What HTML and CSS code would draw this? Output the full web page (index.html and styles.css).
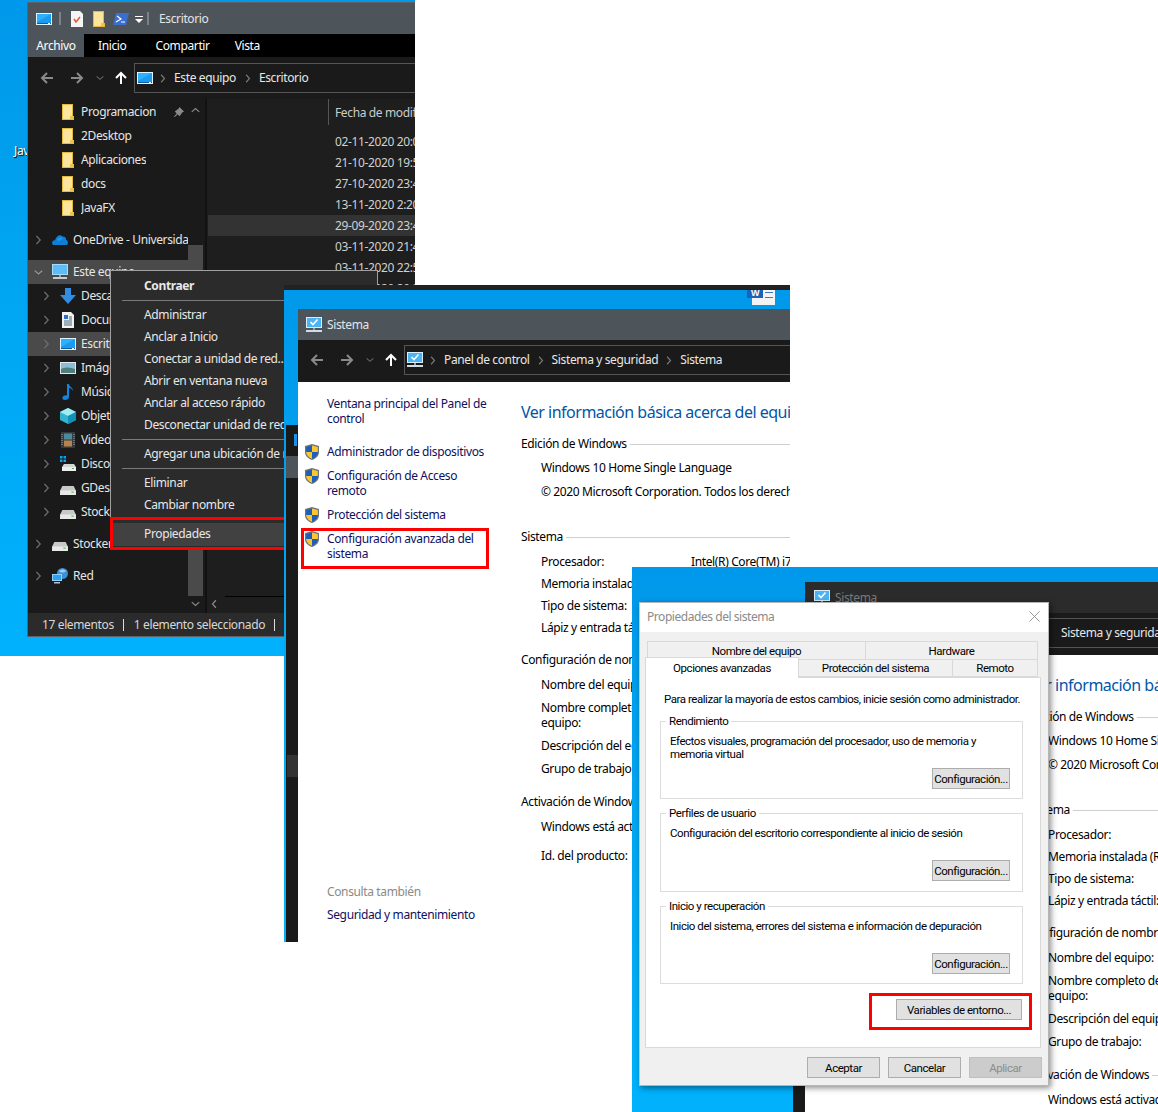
FILE: index.html
```html
<!DOCTYPE html>
<html lang="es">
<head>
	<meta charset="UTF-8">
	<title>Variables de entorno</title>
	<link rel="stylesheet" href="styles.css">
</head>
<body>
	<svg class="sprite" width="0" height="0">
		<symbol id="pc" viewBox="0 0 16 12"><rect width="16" height="12" fill="#dff2ff"/><rect x="1" y="1" width="14" height="9" fill="#1a9bf2"/><path d="M1 1h14L1 9z" fill="#2fb0fa"/><rect x="1" y="10" width="14" height="1" fill="#0a5fa8"/><rect x="12" y="10" width="2" height="1" fill="#fff"/></symbol>
		<symbol id="cp" viewBox="0 0 16 16"><rect width="16" height="11" fill="#d7eefc"/><rect x="1" y="1" width="14" height="9" fill="#4cb4f4"/><path d="M4.500 5l2.500 2.500 4.500-5" fill="none" stroke="#fff" stroke-width="1.600"/><rect x="7" y="11" width="2" height="2" fill="#8fa0ac"/><rect y="13" width="16" height="2" fill="#d3dce2"/></symbol>
		<symbol id="monitor" viewBox="0 0 16 16"><rect width="16" height="11" fill="#a6dcfc"/><rect x="1" y="1" width="14" height="9" fill="#5cbdf7"/><rect x="7" y="11" width="2" height="2" fill="#8fa0ac"/><rect x="1" y="13" width="14" height="2" fill="#c3ced6"/></symbol>
		<symbol id="folder" viewBox="0 0 12 16"><path d="M0 0h11v12h1v4H0z" fill="#e5b93f"/><path d="M1 1h9v11h1v3H1z" fill="#fde59c"/><path d="M8 12h3v3H8z" fill="#f0c350"/></symbol>
		<symbol id="clip" viewBox="0 0 12 16"><path d="M0 0h9l3 3v13H0z" fill="#f5f5f5"/><path d="M3 8l2 3 4-5" fill="none" stroke="#e0542b" stroke-width="1.400"/></symbol>
		<symbol id="ps" viewBox="0 0 16 12"><path d="M3 0h13l-3 12H0z" fill="#3a6fd0"/><path d="M4 3l4 3-5 3" fill="none" stroke="#fff" stroke-width="1.200"/><path d="M8 9h4" stroke="#fff"/></symbol>
		<symbol id="qat" viewBox="0 0 8 8"><path d="M0 0h8v1H0zM0 3h8L4 7z" fill="#fff"/></symbol>
		<symbol id="shield" viewBox="0 0 16 16"><path d="M8 0l7 2v6c0 4-3 6.500-7 8-4-1.500-7-4-7-8V2z" fill="#6b7480"/><path d="M8 1.500L2.200 3v5H8z" fill="#1d5fb5"/><path d="M8 1.500L13.800 3v5H8z" fill="#fcc72e"/><path d="M2.200 8H8v6.800C5 13.500 2.400 11.500 2.200 8z" fill="#fcc72e"/><path d="M13.800 8H8v6.800c3-1.300 5.600-3.300 5.800-6.800z" fill="#1d5fb5"/></symbol>
		<symbol id="back" viewBox="0 0 14 14"><path d="M13 7H2M7 2L2 7l5 5" fill="none" stroke="currentColor" stroke-width="2"/></symbol>
		<symbol id="fwd" viewBox="0 0 14 14"><path d="M1 7h11M7 2l5 5-5 5" fill="none" stroke="currentColor" stroke-width="2"/></symbol>
		<symbol id="up" viewBox="0 0 14 14"><path d="M7 13V2M2 7l5-5 5 5" fill="none" stroke="currentColor" stroke-width="2"/></symbol>
		<symbol id="chev-r" viewBox="0 0 8 12"><path d="M1.500 1l4.500 5-4.500 5" fill="none" stroke="currentColor" stroke-width="1.600"/></symbol>
		<symbol id="chev-d" viewBox="0 0 12 8"><path d="M1 1.500l5 4.500 5-4.500" fill="none" stroke="currentColor" stroke-width="1.600"/></symbol>
		<symbol id="chev-u" viewBox="0 0 12 8"><path d="M1 6.500L6 2l5 4.500" fill="none" stroke="currentColor" stroke-width="1.600"/></symbol>
		<symbol id="chev-l" viewBox="0 0 8 12"><path d="M6.500 1L2 6l4.500 5" fill="none" stroke="currentColor" stroke-width="1.600"/></symbol>
		<symbol id="pin" viewBox="0 0 12 12"><path d="M7 0l5 5-2 1-2 3-1 1-2-2-3 3-1-.5L4 7 2 5l1-1 3-2z" fill="#8a8a8a"/></symbol>
		<symbol id="cloud" viewBox="0 0 16 12"><path d="M1 11c-2-2-.500-5 2-4.800C4 2 8-.5 10.500 2.500c3-.5 4 2 3.500 3.500 2 0 2.500 3.500 1 5z" fill="#0d7fd8"/><path d="M5 6c1.500-3 5-3 6-1-2 0-3 1-3 2z" fill="#1a9bee"/></symbol>
		<symbol id="down" viewBox="0 0 16 16"><path d="M5 0h6v7h5l-8 9-8-9h5z" fill="#2f8de4"/></symbol>
		<symbol id="doc" viewBox="0 0 12 16"><path d="M0 0h9l3 3v13H0z" fill="#f2f2f2"/><path d="M2 3h4v4H2z" fill="#2f6fd0"/><path d="M7 5h3M7 7h3M2 9h8M2 11h8M2 13h8" stroke="#4a6a80"/></symbol>
		<symbol id="pic" viewBox="0 0 16 12"><rect width="16" height="12" fill="#e4e8ea"/><rect x="1" y="1" width="14" height="10" fill="#8cbcd6"/><path d="M1 7c4-2 9-2 14 0v4H1z" fill="#4f7f7a"/></symbol>
		<symbol id="note" viewBox="0 0 12 16"><path d="M5 0h2c0 3 4 3 4 7-1-2-2-3-4-3v9c0 2-2 3-4 3s-3-1-2.500-2.500S3 11 5 11.500z" fill="#1384e0"/></symbol>
		<symbol id="cube" viewBox="0 0 16 16"><path d="M8 0l8 4v8l-8 4-8-4V4z" fill="#33b4cf"/><path d="M8 0l8 4-8 4-8-4z" fill="#9fecf2"/><path d="M8 8v8l8-4V4z" fill="#1490b8"/></symbol>
		<symbol id="film" viewBox="0 0 14 16"><rect width="14" height="16" fill="#333b40"/><rect x="3" y="1.500" width="8" height="6" fill="#4c8a9a"/><rect x="3" y="8.500" width="8" height="6" fill="#b9824a"/><path d="M1 2v12M13 2v12" stroke="#aaa" stroke-dasharray="1 1"/></symbol>
		<symbol id="drive" viewBox="0 0 14 8"><path d="M2 0h10l2 4v4H0V4z" fill="#c8c8c8"/><path d="M0 4h14v4H0z" fill="#e8e8e8"/><rect x="10" y="5" width="2" height="1" fill="#3fc24a"/></symbol>
		<symbol id="win-drive" viewBox="0 0 16 16"><path d="M0 0h2.500v2.500H0zM3.500 0H6v2.500H3.500zM0 3.500h2.500V6H0zM3.500 3.500H6V6H3.500z" fill="#0fa0ee"/><path d="M4 8h10l2 3v4H2v-4z" fill="#d5d5d5"/><path d="M2 11h14v4H2z" fill="#eee"/><rect x="12" y="12" width="2" height="1" fill="#3fc24a"/></symbol>
		<symbol id="net" viewBox="0 0 16 16"><circle cx="10.500" cy="5.500" r="5.500" fill="#3e8fd6"/><path d="M7 3c2-2 5-2 7 0-2 2-5 2-7 0z" fill="#9ccdf0"/><rect y="6" width="10" height="7" fill="#8fd3fb"/><rect x="1" y="7" width="8" height="5" fill="#2fa0ee"/><rect x="2" y="14" width="6" height="1.500" fill="#b6c3cc"/></symbol>
	</svg>

	<!-- primera captura: explorador -->
	<section class="shot shot-a">
		<span class="desk-label">Jav</span>
		<div class="win">
			<div class="title-bar">
				<svg class="ico pc-ico"><use href="#pc"/></svg>
				<i class="title-sep"></i>
				<svg class="ico tall-ico clip-ico"><use href="#clip"/></svg>
				<svg class="ico tall-ico"><use href="#folder"/></svg>
				<svg class="ico pc-ico"><use href="#ps"/></svg>
				<svg class="qat-drop"><use href="#qat"/></svg>
				<i class="title-sep"></i>
				<span class="title-text">Escritorio</span>
			</div>
			<div class="ribbon">
				<span class="rib-tab rib-file">Archivo</span>
				<span class="rib-tab rib-inicio">Inicio</span>
				<span class="rib-tab rib-share">Compartir</span>
				<span class="rib-tab rib-view">Vista</span>
			</div>
			<div class="nav-bar">
				<div class="nav-btns">
					<svg class="nav-ico"><use href="#back"/></svg>
					<svg class="nav-ico"><use href="#fwd"/></svg>
					<svg class="nav-drop"><use href="#chev-d"/></svg>
					<svg class="nav-ico nav-up"><use href="#up"/></svg>
				</div>
				<div class="crumbs">
					<svg class="ico pc-ico"><use href="#pc"/></svg>
					<svg class="crumb-sep"><use href="#chev-r"/></svg>
					<span>Este equipo</span>
					<svg class="crumb-sep"><use href="#chev-r"/></svg>
					<span>Escritorio</span>
				</div>
			</div>
			<div class="explorer">
				<div class="tree">
					<div class="tree-row sub-folder"><svg class="ico tall-ico"><use href="#folder"/></svg><span>Programacion</span></div>
					<div class="tree-row sub-folder"><svg class="ico tall-ico"><use href="#folder"/></svg><span>2Desktop</span></div>
					<div class="tree-row sub-folder"><svg class="ico tall-ico"><use href="#folder"/></svg><span>Aplicaciones</span></div>
					<div class="tree-row sub-folder"><svg class="ico tall-ico"><use href="#folder"/></svg><span>docs</span></div>
					<div class="tree-row sub-folder"><svg class="ico tall-ico"><use href="#folder"/></svg><span>JavaFX</span></div>
					<div class="tree-row root spaced"><svg class="chev"><use href="#chev-r"/></svg><svg class="ico pc-ico"><use href="#cloud"/></svg><span>OneDrive - Universida</span></div>
					<div class="tree-row root spaced hot"><svg class="chev-open"><use href="#chev-d"/></svg><svg class="ico box-ico"><use href="#monitor"/></svg><span>Este equipo</span></div>
					<div class="tree-row child"><svg class="chev"><use href="#chev-r"/></svg><svg class="ico box-ico"><use href="#down"/></svg><span>Descargas</span></div>
					<div class="tree-row child"><svg class="chev"><use href="#chev-r"/></svg><svg class="ico box-ico"><use href="#doc"/></svg><span>Documentos</span></div>
					<div class="tree-row child hot"><svg class="chev"><use href="#chev-r"/></svg><svg class="ico box-ico"><use href="#pc"/></svg><span>Escritorio</span></div>
					<div class="tree-row child"><svg class="chev"><use href="#chev-r"/></svg><svg class="ico box-ico"><use href="#pic"/></svg><span>Imágenes</span></div>
					<div class="tree-row child"><svg class="chev"><use href="#chev-r"/></svg><svg class="ico box-ico"><use href="#note"/></svg><span>Música</span></div>
					<div class="tree-row child"><svg class="chev"><use href="#chev-r"/></svg><svg class="ico box-ico"><use href="#cube"/></svg><span>Objetos 3D</span></div>
					<div class="tree-row child"><svg class="chev"><use href="#chev-r"/></svg><svg class="ico box-ico"><use href="#film"/></svg><span>Videos</span></div>
					<div class="tree-row child"><svg class="chev"><use href="#chev-r"/></svg><svg class="ico box-ico"><use href="#win-drive"/></svg><span>Disco local</span></div>
					<div class="tree-row child"><svg class="chev"><use href="#chev-r"/></svg><svg class="ico drive-ico"><use href="#drive"/></svg><span>GDesktop</span></div>
					<div class="tree-row child"><svg class="chev"><use href="#chev-r"/></svg><svg class="ico drive-ico"><use href="#drive"/></svg><span>Stockage</span></div>
					<div class="tree-row root spaced"><svg class="chev"><use href="#chev-r"/></svg><svg class="ico drive-ico"><use href="#drive"/></svg><span>Stocker</span></div>
					<div class="tree-row root spaced"><svg class="chev"><use href="#chev-r"/></svg><svg class="ico box-ico"><use href="#net"/></svg><span>Red</span></div>
				</div>
				<div class="tree-scroll">
					<svg class="pin"><use href="#pin"/></svg>
					<svg class="scroll-arrow arrow-top"><use href="#chev-u"/></svg>
					<div class="scroll-thumb"></div>
					<svg class="scroll-arrow"><use href="#chev-d"/></svg>
				</div>
				<div class="files">
					<div class="files-head"><span>Fecha de modificación</span></div>
					<div class="file-row">02-11-2020 20:08</div>
					<div class="file-row">21-10-2020 19:53</div>
					<div class="file-row">27-10-2020 23:42</div>
					<div class="file-row">13-11-2020 2:20</div>
					<div class="file-row on">29-09-2020 23:47</div>
					<div class="file-row">03-11-2020 21:44</div>
					<div class="file-row">03-11-2020 22:51</div>
					<div class="file-row">02-11-2020 20:21</div>
				</div>
			</div>
			<div class="status-bar">
				<span>17 elementos</span><i></i><span>1 elemento seleccionado</span><i></i>
			</div>
			<svg class="hscroll-arrow"><use href="#chev-l"/></svg>
			<div class="hscroll-line"></div>
		</div>
		<div class="menu">
			<div class="menu-item menu-bold">Contraer</div>
			<hr>
			<div class="menu-item">Administrar</div>
			<div class="menu-item">Anclar a Inicio</div>
			<div class="menu-item">Conectar a unidad de red...</div>
			<div class="menu-item">Abrir en ventana nueva</div>
			<div class="menu-item">Anclar al acceso rápido</div>
			<div class="menu-item">Desconectar unidad de red...</div>
			<hr>
			<div class="menu-item">Agregar una ubicación de red</div>
			<hr>
			<div class="menu-item">Eliminar</div>
			<div class="menu-item">Cambiar nombre</div>
			<hr class="menu-gap">
			<div class="menu-item menu-hover">Propiedades</div>
		</div>
		<div class="red-box red-prop"></div>
	</section>

	<!-- segunda captura: sistema -->
	<section class="shot shot-b">
		<div class="top-strip"></div>
		<div class="word-tile"><span>W</span></div>
		<div class="back-win"><i class="back-tick"></i><i class="back-gray"></i><i class="back-lower"></i></div>
		<div class="cp-win">
			<div class="cp-title"><svg class="ico box-ico"><use href="#cp"/></svg><span>Sistema</span></div>
			<div class="cp-nav">
				<div class="nav-btns">
					<svg class="nav-ico"><use href="#back"/></svg>
					<svg class="nav-ico"><use href="#fwd"/></svg>
					<svg class="nav-drop"><use href="#chev-d"/></svg>
					<svg class="nav-ico nav-up"><use href="#up"/></svg>
				</div>
				<div class="crumbs">
					<svg class="ico box-ico"><use href="#cp"/></svg>
					<svg class="crumb-sep"><use href="#chev-r"/></svg>
					<span>Panel de control</span>
					<svg class="crumb-sep"><use href="#chev-r"/></svg>
					<span>Sistema y seguridad</span>
					<svg class="crumb-sep"><use href="#chev-r"/></svg>
					<span>Sistema</span>
				</div>
			</div>
			<div class="cp-body">
				<aside class="cp-side">
					<a class="side-link side-first">Ventana principal del Panel de<br>control</a>
					<a class="side-link side-shield"><svg class="ico box-ico"><use href="#shield"/></svg>Administrador de dispositivos</a>
					<a class="side-link side-shield"><svg class="ico box-ico"><use href="#shield"/></svg>Configuración de Acceso<br>remoto</a>
					<a class="side-link side-shield"><svg class="ico box-ico"><use href="#shield"/></svg>Protección del sistema</a>
					<a class="side-link side-shield"><svg class="ico box-ico"><use href="#shield"/></svg>Configuración avanzada del<br>sistema</a>
					<div class="side-also">Consulta también</div>
					<a class="side-link side-last">Seguridad y mantenimiento</a>
				</aside>
				<main class="cp-main">
					<h1 class="cp-head">Ver información básica acerca del equipo</h1>
					<h2 class="cp-sect cp-sect-1">Edición de Windows</h2>
					<div class="cp-item gap-8">Windows 10 Home Single Language</div>
					<div class="cp-item gap-8">© 2020 Microsoft Corporation. Todos los derechos reservados.</div>
					<h2 class="cp-sect gap-29">Sistema</h2>
					<div class="cp-item gap-9"><span class="cp-key">Procesador:</span><span>Intel(R) Core(TM) i7</span></div>
					<div class="cp-item">Memoria instalada (RAM):</div>
					<div class="cp-item">Tipo de sistema:</div>
					<div class="cp-item">Lápiz y entrada táctil:</div>
					<h2 class="cp-sect gap-16">Configuración de nombre</h2>
					<div class="cp-item gap-9">Nombre del equipo:</div>
					<div class="cp-item cp-two gap-7">Nombre completo del<br>equipo:</div>
					<div class="cp-item gap-8">Descripción del equipo:</div>
					<div class="cp-item gap-7">Grupo de trabajo:</div>
					<h2 class="cp-sect gap-17">Activación de Windows</h2>
					<div class="cp-item gap-9">Windows está activado</div>
					<div class="cp-item gap-13">Id. del producto:</div>
				</main>
			</div>
		</div>
		<div class="red-box red-adv"></div>
	</section>

	<!-- tercera captura: propiedades del sistema -->
	<section class="shot shot-c">
		<div class="edge-dark"></div>
		<div class="cp-win cp-win-off">
			<div class="cp-title"><svg class="ico box-ico"><use href="#cp"/></svg><span>Sistema</span></div>
			<div class="cp-nav">
				<div class="crumbs crumbs-off">
					<span>Sistema y seguridad</span>
				</div>
			</div>
			<div class="cp-body">
				<aside class="cp-side"></aside>
				<main class="cp-main">
					<h1 class="cp-head">Ver información básica acerca del equipo</h1>
					<h2 class="cp-sect cp-sect-1">Edición de Windows</h2>
					<div class="cp-item gap-8">Windows 10 Home Single Language</div>
					<div class="cp-item gap-8">© 2020 Microsoft Corporation. Todos</div>
					<h2 class="cp-sect gap-29">Sistema</h2>
					<div class="cp-item gap-9">Procesador:</div>
					<div class="cp-item">Memoria instalada (RAM):</div>
					<div class="cp-item">Tipo de sistema:</div>
					<div class="cp-item">Lápiz y entrada táctil:</div>
					<h2 class="cp-sect gap-16">Configuración de nombre</h2>
					<div class="cp-item gap-9">Nombre del equipo:</div>
					<div class="cp-item cp-two gap-7">Nombre completo del<br>equipo:</div>
					<div class="cp-item gap-8">Descripción del equipo:</div>
					<div class="cp-item gap-7">Grupo de trabajo:</div>
					<h2 class="cp-sect gap-17">Activación de Windows</h2>
					<div class="cp-item gap-9">Windows está activado</div>
				</main>
			</div>
		</div>

		<div class="dialog">
			<div class="dlg-title"><span>Propiedades del sistema</span>
				<svg class="dlg-close" viewBox="0 0 12 12"><path d="M.5.5l11 11M11.500.5l-11 11" stroke="#8c8c8c" fill="none"/></svg>
			</div>
			<div class="dlg-body">
				<div class="tabs tabs-back">
					<span class="tab tab-name">Nombre del equipo</span>
					<span class="tab tab-hard">Hardware</span>
				</div>
				<div class="tabs tabs-front">
					<span class="tab tab-sel">Opciones avanzadas</span>
					<span class="tab tab-prot">Protección del sistema</span>
					<span class="tab tab-rem">Remoto</span>
				</div>
				<div class="page">
					<p class="page-note">Para realizar la mayoría de estos cambios, inicie sesión como administrador.</p>
					<div class="group">
						<span class="group-title">Rendimiento</span>
						<p>Efectos visuales, programación del procesador, uso de memoria y<br>memoria virtual</p>
						<button class="btn">Configuración...</button>
					</div>
					<div class="group group-mid">
						<span class="group-title">Perfiles de usuario</span>
						<p>Configuración del escritorio correspondiente al inicio de sesión</p>
						<button class="btn">Configuración...</button>
					</div>
					<div class="group">
						<span class="group-title">Inicio y recuperación</span>
						<p>Inicio del sistema, errores del sistema e información de depuración</p>
						<button class="btn">Configuración...</button>
					</div>
					<div class="env-row"><button class="btn btn-env">Variables de entorno...</button></div>
				</div>
				<div class="dlg-foot">
					<button class="btn btn-foot">Aceptar</button>
					<button class="btn btn-foot">Cancelar</button>
					<button class="btn btn-foot btn-off">Aplicar</button>
				</div>
			</div>
		</div>
		<div class="red-box red-env"></div>
	</section>
</body>
</html>
```

FILE: styles.css
```css
* {
	margin: 0;
	padding: 0;
	box-sizing: border-box;
}

html, body {
	background: #fff;
}

body {
	position: relative;
	width: 1158px;
	height: 1112px;
	overflow: hidden;
	font: 12px/16px "Noto Sans", sans-serif;
	letter-spacing: -.37px;
	color: #000;
}

.sprite {
	position: absolute;
}

.ico {
	display: block;
	flex: none;
}

.pc-ico { width: 16px; height: 12px; }
.box-ico { width: 16px; height: 16px; }
.tall-ico { width: 12px; height: 16px; }
.drive-ico { width: 16px; height: 9px; margin-top: 4px; }

/* the three pasted screenshots */
.shot {
	position: absolute;
	overflow: hidden;
	background: linear-gradient(#0098ea, #00a6f2 45%, #00b1fc);
}

.shot-a { left: 0; top: 0; width: 415px; height: 656px; }
.shot-b { left: 284px; top: 285px; width: 506px; height: 657px; }
.shot-c { left: 632px; top: 567px; width: 526px; height: 545px; }

.desk-label {
	position: absolute;
	left: 14px;
	top: 143px;
	color: #fff;
	text-shadow: 1px 1px 1px #000;
}

.red-box {
	position: absolute;
	border: 3px solid #f00;
}

.red-prop { left: 110px; top: 517px; width: 220px; height: 33px; }
.red-adv { left: 17px; top: 243px; width: 188px; height: 41px; }
.red-env { left: 237px; top: 426px; width: 163px; height: 37px; }

/* explorer */
.win {
	position: absolute;
	left: 28px;
	top: 3px;
	width: 400px;
	height: 633px;
	display: flex;
	flex-direction: column;
	background: #1a1a1a;
	color: #e6e6e6;
	box-shadow: 0 0 0 1px #5f6368;
}

.title-bar {
	height: 31px;
	flex: none;
	display: flex;
	align-items: center;
	padding-left: 8px;
	background: #4d555b;
}

.title-bar .pc-ico + .title-sep { margin-left: 7px; }
.title-sep {
	width: 2px;
	height: 13px;
	background: #7b8388;
}
.clip-ico { margin-left: 10px; }
.title-bar .tall-ico + .tall-ico { margin-left: 10px; }
.title-bar .tall-ico + .pc-ico { margin-left: 8px; }
.qat-drop {
	width: 8px;
	height: 8px;
	margin: 3px 0 0 6px;
	flex: none;
}
.qat-drop + .title-sep { margin-left: 4px; }
.title-text {
	margin-left: 10px;
	color: #e3e6e8;
}

.ribbon {
	height: 23px;
	flex: none;
	display: flex;
	align-items: center;
	background: #000;
	color: #fff;
}

.rib-tab { line-height: 23px; }
.rib-file {
	width: 56px;
	text-align: center;
	background: #4d555b;
}
.rib-inicio { margin-left: 14px; }
.rib-share { margin-left: 29px; }
.rib-view { margin-left: 25px; }

.nav-bar, .cp-nav {
	flex: none;
	display: flex;
	align-items: center;
	background: #1a1a1a;
}

.nav-bar {
	height: 42px;
}

.nav-btns {
	width: 106px;
	flex: none;
	display: flex;
	align-items: center;
	padding-left: 12px;
	color: #8a8a8a;
}

.nav-ico {
	width: 14px;
	height: 14px;
	margin-right: 16px;
	flex: none;
}

.nav-drop {
	width: 8px;
	height: 6px;
	margin-right: 10px;
	margin-left: -4px;
	color: #666;
	flex: none;
}

.nav-up {
	color: #fff;
	margin-right: 0;
}

.crumbs {
	flex: 1;
	height: 30px;
	display: flex;
	align-items: center;
	padding-left: 2px;
	border: 1px solid #555;
	color: #e8e8e8;
	white-space: nowrap;
}

.crumb-sep {
	width: 6px;
	height: 9px;
	margin: 0 8px 0 7px;
	color: #777;
	flex: none;
}

.crumbs span + .crumb-sep { margin-left: 9px; }

.explorer {
	flex: 1;
	min-height: 0;
	display: flex;
	background: #1a1a1a;
}

.tree {
	width: 160px;
	flex: none;
	padding-top: 1px;
	overflow: hidden;
}

.tree-row {
	height: 24px;
	display: flex;
	align-items: center;
	white-space: nowrap;
}

.tree-row span { overflow: hidden; }

.sub-folder { padding-left: 34px; }
.sub-folder span { margin-left: 7px; }

.root { padding-left: 7px; }
.root .ico { margin-left: 10px; }
.root span { margin-left: 5px; }
.spaced { margin-top: 8px; }

.child { padding-left: 15px; }
.child .ico { margin-left: 10px; }
.child span { margin-left: 5px; }

.hot { background: #4a4a4a; }

.chev {
	width: 7px;
	height: 10px;
	flex: none;
	color: #6e6e6e;
}

.chev-open {
	width: 9px;
	height: 7px;
	flex: none;
	margin: 0 -1px 0 -1px;
	color: #999;
}

.tree-scroll {
	width: 15px;
	flex: none;
	position: relative;
	display: flex;
	flex-direction: column;
	align-items: center;
	color: #8a8a8a;
}

.scroll-arrow {
	width: 9px;
	height: 6px;
	flex: none;
}

.arrow-top {
	margin-top: 8px;
}

.pin {
	position: absolute;
	left: -15px;
	top: 8px;
	width: 11px;
	height: 11px;
}

.scroll-thumb {
	width: 15px;
	height: 351px;
	margin-top: 132px;
	margin-bottom: 5px;
	background: #4a4a4a;
}

.hscroll-arrow {
	position: absolute;
	left: 183px;
	top: 596px;
	width: 6px;
	height: 10px;
	color: #8a8a8a;
}

.hscroll-line {
	position: absolute;
	left: 197px;
	top: 593px;
	width: 200px;
	height: 1px;
	background: #000;
}

.files {
	flex: 1;
	margin-left: 2px;
	padding-left: 1px;
	border-left: 2px solid #111;
	background: #1e1e1e;
	white-space: nowrap;
	overflow: hidden;
}

.files-head {
	height: 26px;
	padding-left: 120px;
	display: flex;
}

.files-head span {
	height: 26px;
	line-height: 28px;
	padding-left: 6px;
	border-left: 1px solid #555;
	color: #ccc;
}

.file-row {
	height: 21px;
	line-height: 21px;
	padding-left: 127px;
	color: #d0d0d0;
}

.files-head + .file-row { margin-top: 6px; }
.file-row.on { background: #333; }

.status-bar {
	height: 23px;
	flex: none;
	display: flex;
	align-items: center;
	padding-left: 14px;
	background: #2b2b2b;
	color: #d8d8d8;
}

.status-bar i {
	width: 1px;
	height: 12px;
	margin: 0 10px 0 9px;
	background: #ddd;
}

/* context menu */
.menu {
	position: absolute;
	left: 110px;
	top: 270px;
	width: 268px;
	height: 280px;
	padding: 4px 0 0 1px;
	background: #2b2b2b;
	border: 1px solid #a0a0a0;
	color: #e8e8e8;
}

.menu hr {
	height: 1px;
	margin: 3px 0 3px 10px;
	border: 0;
	background: #7a7a7a;
}

.menu hr.menu-gap {
	background: none;
	margin: 3px 0;
}

.menu-item {
	height: 22px;
	line-height: 22px;
	padding-left: 32px;
	white-space: nowrap;
	overflow: hidden;
}

.menu-bold { font-weight: 700; }

.menu-hover {
	height: 23px;
	background: #414141;
}

/* behind the control panel */
.top-strip {
	height: 5px;
	background: #222;
}

.word-tile {
	position: absolute;
	left: 468px;
	top: 5px;
	width: 23px;
	height: 15px;
	background: #f3f3f3;
}

.word-tile span {
	display: block;
	width: 16px;
	height: 8px;
	margin-left: -5px;
	background: #1e5fb8;
	color: #fff;
	font: 700 9px/6px "Liberation Sans", sans-serif;
	text-align: center;
}

.word-tile::after {
	content: "";
	position: absolute;
	left: 13px;
	top: 2px;
	width: 8px;
	height: 4px;
	border-top: 1px solid #3a78c8;
	border-bottom: 1px solid #3a78c8;
}

.back-win {
	position: absolute;
	left: 2px;
	top: 140px;
	width: 12px;
	bottom: 0;
	background: #1a1a1a;
}

.back-tick {
	position: absolute;
	left: 8px;
	top: 9px;
	width: 3px;
	height: 12px;
	background: #1a8fe6;
}

.back-gray {
	position: absolute;
	left: 0;
	top: 31px;
	width: 12px;
	height: 22px;
	background: #4d555b;
}

.back-lower {
	position: absolute;
	left: 1px;
	top: 330px;
	width: 11px;
	height: 22px;
	background: #333;
}

/* control panel */
.cp-win {
	position: absolute;
	left: 14px;
	top: 24px;
	width: 800px;
	height: 700px;
	display: flex;
	flex-direction: column;
	background: #fff;
}

.cp-title {
	height: 31px;
	flex: none;
	display: flex;
	align-items: center;
	gap: 5px;
	padding-left: 8px;
	background: #4d555b;
	color: #e3e6e8;
}

.cp-nav {
	height: 42px;
	padding-bottom: 2px;
}

.cp-nav .crumbs span + .crumb-sep { margin-left: 8px; }

.cp-body {
	flex: 1;
	min-height: 0;
	display: flex;
	background: #fff;
}

.cp-side {
	width: 223px;
	flex: none;
	padding-top: 14px;
	display: flex;
	flex-direction: column;
}

.side-link {
	display: block;
	position: relative;
	padding-left: 29px;
	line-height: 15px;
	color: #101060;
}

.side-shield .ico {
	position: absolute;
	left: 6px;
	top: 0;
}

.side-first { margin-bottom: 18px; }
.side-shield + .side-shield { margin-top: 9px; }
.side-also {
	margin-top: 323px;
	padding-left: 29px;
	line-height: 15px;
	color: #8a8a8a;
}
.side-last { margin-top: 8px; }

.cp-main {
	flex: 1;
	padding-top: 18px;
	white-space: nowrap;
}

.cp-head {
	height: 24px;
	font-size: 16px;
	line-height: 24px;
	font-weight: 400;
	letter-spacing: -.5px;
	color: #0056a8;
}

.cp-sect {
	display: flex;
	align-items: center;
	height: 16px;
	font-size: 12px;
	font-weight: 400;
}

.cp-sect::after {
	content: "";
	flex: 1;
	height: 1px;
	margin-left: 3px;
	background: #cfcfcf;
}

.cp-sect-1 { margin-top: 12px; }

.cp-item {
	height: 16px;
	margin-top: 6px;
	padding-left: 20px;
	display: flex;
}

.cp-two {
	display: block;
	height: 30px;
	line-height: 15px;
}

.cp-key { width: 150px; flex: none; }

.gap-7 { margin-top: 7px; }
.gap-8 { margin-top: 8px; }
.gap-9 { margin-top: 9px; }
.gap-13 { margin-top: 13px; }
.gap-16 { margin-top: 16px; }
.gap-17 { margin-top: 17px; }
.gap-29 { margin-top: 29px; }

.edge-dark {
	position: absolute;
	left: 161px;
	top: 500px;
	width: 14px;
	bottom: 0;
	background: #1a1a1a;
}

.cp-win-off {
	left: 173px;
	top: 15px;
}

.cp-win-off .cp-title {
	background: #2b2b2b;
	color: #7a7a7a;
}

.cp-win-off .cp-title .ico { margin-left: 1px; }

.cp-win-off .cp-nav {
	padding-left: 106px;
}

.cp-nav .crumbs-off {
	padding-left: 149px;
}

/* dialog */
.dialog {
	position: absolute;
	left: 7px;
	top: 35px;
	width: 410px;
	height: 484px;
	display: flex;
	flex-direction: column;
	background: #f0f0f0;
	border: 1px solid #b5b5b5;
	border-left-color: #c8c8c8;
	box-shadow: 2px 2px 6px rgba(0, 0, 0, .45);
	font: 11.5px/14px Roboto, sans-serif;
	letter-spacing: -.45px;
}

.dlg-title {
	height: 29px;
	flex: none;
	display: flex;
	align-items: center;
	justify-content: space-between;
	padding: 0 8px 2px 7px;
	background: #fff;
	color: #8a8a8a;
	font: 12px/16px "Noto Sans", sans-serif;
	letter-spacing: -.45px;
}

.dlg-close {
	width: 11px;
	height: 11px;
}

.dlg-body {
	flex: 1;
	min-height: 0;
	display: flex;
	flex-direction: column;
	padding-top: 9px;
}

.tabs {
	display: flex;
	height: 18px;
	flex: none;
}

.tabs-back { margin-left: 7px; width: 391px; }
.tabs-front { margin-left: 5px; width: 393px; position: relative; z-index: 1; }

.tab {
	display: flex;
	align-items: center;
	justify-content: center;
	height: 18px;
	background: #f0f0f0;
	border: 1px solid #d9d9d9;
	border-left-width: 0;
}

.tabs-back .tab { border-bottom: 0; }
.tabs-back .tab-name { width: 219px; border-left-width: 1px; }
.tab-hard { flex: 1; }

.tab-sel {
	width: 154px;
	height: 21px;
	margin-top: -2px;
	padding-bottom: 1px;
	background: #fff;
	border-left-width: 1px;
	border-bottom: 0;
}
.tab-prot { width: 154px; }
.tab-rem { flex: 1; }

.page {
	width: 396px;
	height: 371px;
	flex: none;
	margin-left: 5px;
	padding: 14px 17px 0 14px;
	background: #fff;
	border: 1px solid #d9d9d9;
}

.page-note {
	height: 14px;
	padding-left: 4px;
	white-space: nowrap;
}

.group {
	position: relative;
	display: flex;
	flex-direction: column;
	height: 78px;
	margin-top: 14px;
	padding: 13px 12px 9px 9px;
	border: 1px solid #dcdcdc;
}

.page-note + .group { margin-top: 15px; }
.group-mid { height: 79px; padding-bottom: 10px; }

.group p {
	line-height: 13px;
	white-space: nowrap;
}

.group-title {
	position: absolute;
	left: 5px;
	top: -8px;
	padding: 0 3px;
	background: #fff;
	white-space: nowrap;
}

.btn {
	font: inherit;
	letter-spacing: inherit;
	color: #000;
	background: #e1e1e1;
	border: 1px solid #adadad;
}

.group .btn {
	width: 78px;
	height: 21px;
	margin-top: auto;
	align-self: flex-end;
}

.env-row {
	display: flex;
	justify-content: flex-end;
	margin-top: 15px;
	padding-right: 1px;
}

.btn-env {
	width: 126px;
	height: 21px;
}

.dlg-foot {
	display: flex;
	justify-content: flex-end;
	gap: 8px;
	padding: 9px 6px 0 0;
}

.btn-foot {
	width: 73px;
	height: 21px;
}

.btn-off {
	color: #8c8c8c;
	background: #ccc;
	border-color: #bfbfbf;
}
```
